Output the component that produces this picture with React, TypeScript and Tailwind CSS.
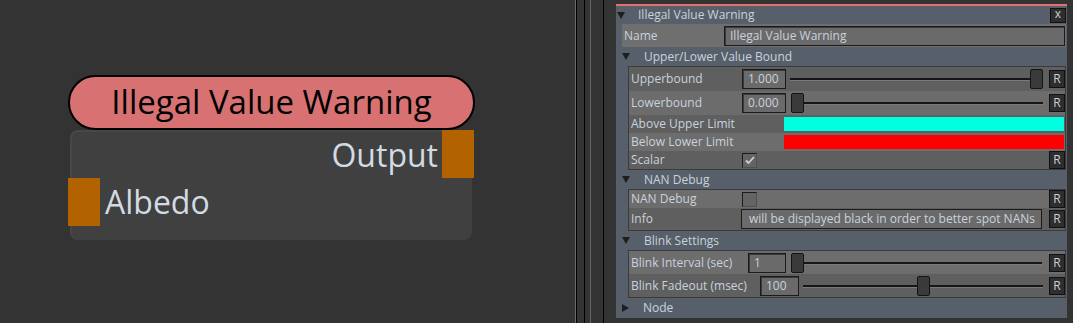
import React from "react";

const labelText = "text-[12px] leading-none text-[#c9d2dc] whitespace-nowrap";

function Tri({ open = true }: { open?: boolean }) {
  return open ? (
    <span className="inline-block h-0 w-0 border-x-[4px] border-t-[7px] border-x-transparent border-t-[#1e1e1e]" />
  ) : (
    <span className="inline-block h-0 w-0 border-y-[4px] border-l-[7px] border-y-transparent border-l-[#1e1e1e]" />
  );
}

function RButton({ label = "R" }: { label?: string }) {
  return (
    <div className="flex h-[18px] w-[16px] shrink-0 items-center justify-center border border-[#111] bg-[#2e2e2e] text-[12px] leading-none text-[#c9d2dc]">
      {label}
    </div>
  );
}

function Field({ value, className }: { value: string; className: string }) {
  return (
    <div
      className={`flex h-[20px] shrink-0 items-center overflow-hidden border border-[#1b1b1b] bg-[#6a6a6a] pl-[5px] shadow-[inset_1px_1px_0_#3a3a3a] ${labelText} ${className}`}
    >
      {value}
    </div>
  );
}

function Slider({ value, className }: { value: number; className: string }) {
  return (
    <div className={`relative h-[20px] shrink-0 ${className}`}>
      <div className="absolute left-0 right-0 top-[9px] h-[2px] bg-[#161616] shadow-[0_1px_0_#7a7a7a]" />
      <div
        className="absolute top-0 h-[20px] w-[13px] rounded-[2px] border border-[#141414] bg-[#3a3a3a]"
        style={{ left: `calc(${value * 100}% - ${value * 13}px)` }}
      />
    </div>
  );
}

function Check({ checked }: { checked: boolean }) {
  return (
    <div className="flex h-[15px] w-[15px] shrink-0 items-center justify-center border border-[#1b1b1b] border-b-[#505050] border-r-[#505050] bg-[#646464]">
      {checked && (
        <svg width="10" height="9" viewBox="0 0 10 9">
          <path d="M1 4.5 L3.5 7 L9 1" fill="none" stroke="#cfcfcf" strokeWidth="1.8" />
        </svg>
      )}
    </div>
  );
}

function Section({ title, open = true }: { title: string; open?: boolean }) {
  return (
    <div className="flex h-[19px] shrink-0 items-center pl-[6px]">
      <Tri open={open} />
      <span className={`ml-[14px] ${labelText}`}>{title}</span>
    </div>
  );
}

function NodeCanvas() {
  return (
    <div className="relative h-full w-[575px] shrink-0">
      <div className="absolute left-[68px] top-[75px] w-[407px]">
        <div className="flex h-[55px] items-center justify-center rounded-full border-2 border-black bg-[#d87272] pb-[2px] text-[33px] text-black">
          Illegal Value Warning
        </div>
        <div className="relative ml-[2px] h-[110px] w-[402px] rounded-[8px] border-l-2 border-t-2 border-[#474747] bg-[#404040] text-[32px] text-[#d2dbe4]">
          <div className="flex h-[46px] items-center justify-end pr-[34px]">Output</div>
          <div className="flex h-[48px] items-center pl-[33px]">Albedo</div>
          <div className="absolute left-[370px] top-[-2px] h-[48px] w-[32px] bg-[#b36200]" />
          <div className="absolute left-[-4px] top-[46px] h-[48px] w-[32px] bg-[#b36200]" />
        </div>
      </div>
    </div>
  );
}

function Dividers() {
  return (
    <div className="flex h-full shrink-0">
      <div className="w-[1px] bg-[#6a6a6a]" />
      <div className="w-[1px] bg-black" />
      <div className="w-[7px]" />
      <div className="w-[1px] bg-black" />
      <div className="w-[5px]" />
      <div className="w-[1px] bg-[#666]" />
      <div className="w-[12px]" />
      <div className="w-[1px] bg-black" />
      <div className="w-[12px]" />
    </div>
  );
}

export default function App() {
  return (
    <div className="flex h-[323px] w-[1073px] overflow-hidden bg-[#333333] font-['Open_Sans',sans-serif]">
      <NodeCanvas />
      <Dividers />
      <div className="mt-[4px] flex h-[314px] w-[451px] shrink-0 flex-col border-t-2 border-[#e07272] bg-[#57606a]">
        {/* node title */}
        <div className="flex h-[18px] shrink-0 items-center pl-[1px] pr-[1px]">
          <Tri />
          <span className={`ml-[13px] ${labelText}`}>Illegal Value Warning</span>
          <div className="ml-auto flex h-[15px] w-[16px] items-center justify-center border border-[#111] bg-[#2e2e2e] pb-[2px] text-[12px] leading-none text-[#c9d2dc]">
            x
          </div>
        </div>

        {/* name */}
        <div className="ml-[6px] mr-[1px] flex h-[23px] shrink-0 items-center bg-[#6f6f6f]">
          <span className={`w-[102px] shrink-0 pl-[2px] ${labelText}`}>Name</span>
          <Field value="Illegal Value Warning" className="mr-[1px] h-[19px] flex-1" />
        </div>

        <Section title="Upper/Lower Value Bound" />
        <div className="ml-[12px] mr-[1px] flex shrink-0 flex-col border border-[#3b3b3b]">
          <div className="flex h-[24px] items-center bg-[#5f5f5f]">
            <span className={`w-[113px] shrink-0 pl-[2px] ${labelText}`}>Upperbound</span>
            <Field value="1.000" className="w-[44px]" />
            <Slider value={1} className="ml-[4px] w-[253px]" />
            <div className="ml-[6px]">
              <RButton />
            </div>
          </div>
          <div className="flex h-[24px] items-center bg-[#6c6c6c]">
            <span className={`w-[113px] shrink-0 pl-[2px] ${labelText}`}>Lowerbound</span>
            <Field value="0.000" className="w-[44px]" />
            <Slider value={0} className="ml-[5px] w-[252px]" />
            <div className="ml-[6px]">
              <RButton />
            </div>
          </div>
          <div className="flex h-[18px] items-center bg-[#5f5f5f]">
            <span className={`w-[155px] shrink-0 pl-[2px] ${labelText}`}>Above Upper Limit</span>
            <div className="mr-[1px] h-[14px] flex-1 bg-[#00ffe1]" />
          </div>
          <div className="flex h-[18px] items-center bg-[#6d6d6d]">
            <span className={`w-[155px] shrink-0 pl-[2px] ${labelText}`}>Below Lower Limit</span>
            <div className="mr-[1px] h-[14px] flex-1 bg-[#ff0000]" />
          </div>
          <div className="flex h-[18px] items-center bg-[#5f5f5f]">
            <span className={`w-[113px] shrink-0 pl-[2px] ${labelText}`}>Scalar</span>
            <Check checked />
            <div className="ml-auto">
              <RButton />
            </div>
          </div>
        </div>

        <Section title="NAN Debug" />
        <div className="ml-[12px] mr-[1px] flex shrink-0 flex-col border border-[#3b3b3b]">
          <div className="flex h-[18px] items-center bg-[#6d6d6d]">
            <span className={`w-[113px] shrink-0 pl-[2px] ${labelText}`}>NAN Debug</span>
            <Check checked={false} />
            <div className="ml-auto">
              <RButton />
            </div>
          </div>
          <div className="flex h-[22px] items-center bg-[#5f5f5f]">
            <span className={`w-[112px] shrink-0 pl-[2px] ${labelText}`}>Info</span>
            <div
              className={`flex h-[20px] w-[301px] shrink-0 items-center justify-end overflow-hidden border border-[#1b1b1b] bg-[#6a6a6a] pr-[6px] ${labelText}`}
            >
              will be displayed black in order to better spot NANs
            </div>
            <div className="ml-auto">
              <RButton />
            </div>
          </div>
        </div>

        <Section title="Blink Settings" />
        <div className="ml-[12px] mr-[1px] flex shrink-0 flex-col border border-[#3b3b3b]">
          <div className="flex h-[23px] items-center bg-[#6d6d6d]">
            <span className={`w-[119px] shrink-0 pl-[2px] ${labelText}`}>Blink Interval (sec)</span>
            <Field value="1" className="w-[38px]" />
            <Slider value={0} className="ml-[5px] w-[251px]" />
            <div className="ml-auto">
              <RButton />
            </div>
          </div>
          <div className="flex h-[23px] items-center bg-[#5f5f5f]">
            <span className={`w-[131px] shrink-0 pl-[2px] ${labelText}`}>Blink Fadeout (msec)</span>
            <Field value="100" className="w-[39px]" />
            <Slider value={0.5} className="ml-[4px] w-[240px]" />
            <div className="ml-auto">
              <RButton />
            </div>
          </div>
        </div>

        <Section title="Node" open={false} />
      </div>
    </div>
  );
}
